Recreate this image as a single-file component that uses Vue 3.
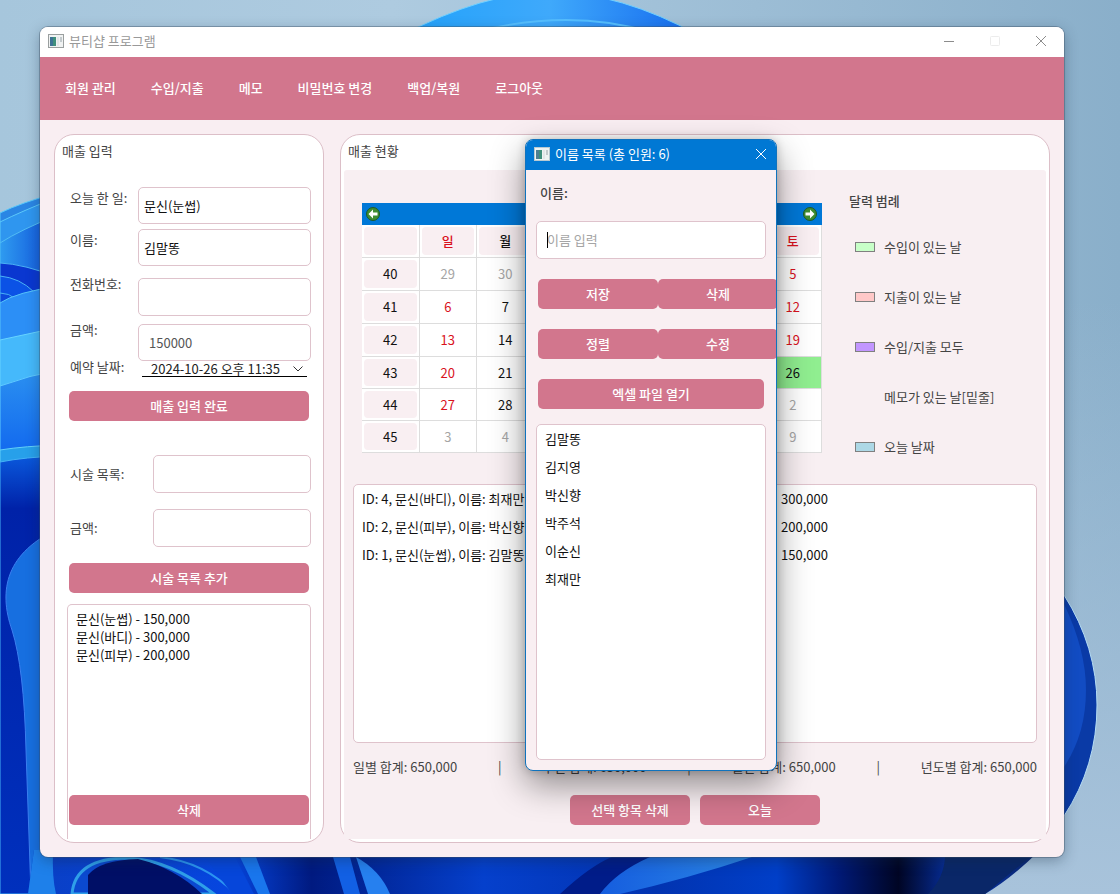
<script setup>
import { ref } from 'vue'

const menus = ['회원 관리', '수입/지출', '메모', '비밀번호 변경', '백업/복원', '로그아웃']

const work = ref('문신(눈썹)')
const customer = ref('김말똥')
const phone = ref('')
const amount = ref('150000')
const service = ref('')
const price = ref('')
const nameQuery = ref('')

const services = ['문신(눈썹) - 150,000', '문신(바디) - 300,000', '문신(피부) - 200,000']

const weekdays = ['일', '월', '화', '수', '목', '금', '토']
const weeks = [
  { no: 40, days: [29, 30, 1, 2, 3, 4, 5] },
  { no: 41, days: [6, 7, 8, 9, 10, 11, 12] },
  { no: 42, days: [13, 14, 15, 16, 17, 18, 19] },
  { no: 43, days: [20, 21, 22, 23, 24, 25, 26] },
  { no: 44, days: [27, 28, 29, 30, 31, 1, 2] },
  { no: 45, days: [3, 4, 5, 6, 7, 8, 9] }
]

const dialogOpen = ref(true)

function isCovered(col) {
  return dialogOpen.value && col > 1 && col < 6
}

function dayClass(row, col, day) {
  const outside = (row === 0 && day > 20) || (row > 3 && day < 10)
  const income = row === 3 && col === 6
  return {
    outside,
    income,
    weekend: !outside && !income && (col === 0 || col === 6)
  }
}

const legend = [
  { tone: 'green', text: '수입이 있는 날' },
  { tone: 'red', text: '지출이 있는 날' },
  { tone: 'purple', text: '수입/지출 모두' },
  { tone: 'none', text: '메모가 있는 날[밑줄]' },
  { tone: 'blue', text: '오늘 날짜' }
]

const records = [
  { text: 'ID: 4, 문신(바디), 이름: 최재만', amount: '300,000' },
  { text: 'ID: 2, 문신(피부), 이름: 박신향', amount: '200,000' },
  { text: 'ID: 1, 문신(눈썹), 이름: 김말똥', amount: '150,000' }
]

const names = ['김말똥', '김지영', '박신향', '박주석', '이순신', '최재만']
</script>

<template>
  <div class="desktop">
    <svg class="wallpaper" viewBox="0 0 1120 894" preserveAspectRatio="none" aria-hidden="true">
      <defs>
        <linearGradient id="sky" x1="0" y1="0" x2="1" y2="0">
          <stop offset="0" stop-color="#a6c6dc" />
          <stop offset=".35" stop-color="#aecbe0" />
          <stop offset="1" stop-color="#8aafca" />
        </linearGradient>
        <linearGradient id="haze" x1="0" y1="0" x2="0" y2="1">
          <stop offset="0" stop-color="#a8c3db" stop-opacity="0" />
          <stop offset="1" stop-color="#a8c3db" />
        </linearGradient>
        <linearGradient id="crest" x1="0" y1="0" x2="1" y2="0">
          <stop offset="0" stop-color="#22a2fb" />
          <stop offset=".5" stop-color="#3fa9fb" />
          <stop offset="1" stop-color="#1468ee" />
        </linearGradient>
        <linearGradient id="petalA" x1="0" y1="0" x2="1" y2="0">
          <stop offset="0" stop-color="#2f9cf0" />
          <stop offset="1" stop-color="#0a45d6" />
        </linearGradient>
        <linearGradient id="petalB" x1="0" y1="0" x2="0" y2="1">
          <stop offset="0" stop-color="#2b90f0" />
          <stop offset="1" stop-color="#0453ee" />
        </linearGradient>
        <linearGradient id="deep" x1="0" y1="0" x2="0" y2="1">
          <stop offset="0" stop-color="#0a58dc" />
          <stop offset=".12" stop-color="#0022a8" />
          <stop offset="1" stop-color="#0030bd" />
        </linearGradient>
        <linearGradient id="floor" x1="0" y1="0" x2="1" y2="0">
          <stop offset="0" stop-color="#0a3fc4" />
          <stop offset=".2" stop-color="#0646e0" />
          <stop offset=".28" stop-color="#001a80" />
          <stop offset=".45" stop-color="#0540cc" />
          <stop offset=".62" stop-color="#0233b0" />
          <stop offset=".74" stop-color="#003fc8" />
          <stop offset=".8" stop-color="#001a78" />
          <stop offset=".86" stop-color="#000524" />
          <stop offset=".92" stop-color="#0836b0" />
          <stop offset="1" stop-color="#0a2468" />
        </linearGradient>
        <linearGradient id="streak" x1="0" y1="0" x2="1" y2="0">
          <stop offset="0" stop-color="#1155dd" />
          <stop offset="1" stop-color="#2b86e6" />
        </linearGradient>
      </defs>
      <rect width="1120" height="894" fill="url(#sky)" />
      <rect y="300" width="1120" height="594" fill="url(#haze)" />

      <path d="M400 36Q485-8 550-8Q620-8 700 36Z" fill="url(#crest)" stroke="#6fd0ff" />
      <path d="M475 32Q570 8 650 32" fill="none" stroke="#55bfff" stroke-width="2" />

      <path d="M0 213Q20 203 60 192V500H0Z" fill="#2a86e4" stroke="#58c8fa" />
      <path d="M0 222Q20 212 60 196V500H0Z" fill="#2f96ef" stroke="#5cc9fa" />
      <path d="M0 243Q20 230 60 214V500H0Z" fill="url(#petalA)" stroke="#51bdf5" />
      <path d="M0 263Q24 264 60 278V500H0Z" fill="#0a37d0" stroke="#4ab2f5" />
      <path d="M0 276Q20 278 34 292V500H0Z" fill="#0b52e6" stroke="#4ab2f5" />
      <path d="M0 293Q9 293 16 299V500H0Z" fill="#0c48dc" stroke="#4ab2f5" />
      <path d="M0 303Q16 292 60 286V500H0Z" fill="#2c8ff6" stroke="#56c3fa" />
      <path d="M0 340L60 327V500H0Z" fill="#45b9fb" stroke="#67d4ff" />
      <path d="M0 386Q30 375 60 370V500H0Z" fill="url(#petalB)" stroke="#5fcbff" />
      <path d="M0 450Q25 446 60 445V894H0Z" fill="#27a0ea" stroke="#63d0f8" />
      <path d="M0 462Q25 457 60 456V894H0Z" fill="url(#deep)" stroke="#45b2f5" />
      <path d="M60 528C6 552-2 590 12 630Q24 668 26 750L31 894H60Z" fill="#176fe0" stroke="#3b7ff0" />

      <path d="M34 850H1040Q1012 878 985 894H28Z" fill="url(#floor)" />
      <path d="M34 850H53Q52 878 56 894H28Z" fill="#1e80ea" />
      <path d="M72 894Q75 858 128 858Q170 860 214 894Z" fill="#0b49d0" stroke="#2f9fe9" stroke-width="3" />
      <path d="M88 894V875Q100 860 138 859Q175 868 202 894Z" fill="#000f66" />
      <path d="M160 857Q205 862 235 894" fill="none" stroke="#2b95f2" stroke-width="2" />
      <path d="M205 857H235L254 894H232Z" fill="#0646da" />
      <path d="M240 857H256L270 894H258Z" fill="#1976ed" />
      <path d="M333 857H350L360 894H344Z" fill="#1260e4" />
      <path d="M356 857Q380 870 390 894H368Z" fill="#2680ef" />
      <path d="M570 894Q602 864 622 857H752Q690 878 620 894Z" fill="url(#streak)" />
      <path d="M560 894Q590 866 612 857H650Q616 872 600 894Z" fill="#001c89" />
      <path d="M945 857H1030L985 894H928Q944 878 945 857Z" fill="#0a2768" />
      <path d="M1064 595Q1097 647 1097 705Q1097 766 1064 816H1050V595Z" fill="#0a3aa6" stroke="#b5dcf4" />
      <path d="M1064 604Q1086 650 1086 690Q1086 734 1064 767H1050V604Z" fill="#124cc3" />
    </svg>

    <main class="window">
      <header class="titlebar">
        <svg class="app-icon" viewBox="0 0 16 14" aria-hidden="true">
          <rect x=".5" y=".5" width="15" height="13" fill="#f0f2f2" stroke="#9a9f9f" />
          <rect x="2" y="3" width="6" height="9" fill="#3f8f7c" />
          <rect x="2" y="3" width="3" height="9" fill="#3d7295" />
          <rect x="9" y="3" width="2" height="9" fill="#e3e6e8" />
          <rect x="12" y="3" width="2" height="5" fill="#c3cacd" />
        </svg>
        <h1 class="app-title">뷰티샵 프로그램</h1>
        <button class="win-btn" aria-label="최소화">
          <svg viewBox="0 0 12 12"><path d="M1 6.5H11" stroke="#8c8c8c" /></svg>
        </button>
        <button class="win-btn" aria-label="최대화" disabled>
          <svg viewBox="0 0 12 12"><rect x="1.5" y="1.5" width="9" height="9" rx="1" fill="none" stroke="#ececec" /></svg>
        </button>
        <button class="win-btn" aria-label="닫기">
          <svg viewBox="0 0 12 12"><path d="M1 1L11 11M11 1L1 11" stroke="#8c8c8c" /></svg>
        </button>
      </header>

      <nav class="menu">
        <button v-for="m in menus" :key="m">{{ m }}</button>
      </nav>

      <div class="content">
        <section class="panel entry">
          <h2>매출 입력</h2>
          <div class="form">
            <div class="row">
              <label for="work">오늘 한 일:</label>
              <input id="work" v-model="work" type="text" />
            </div>
            <div class="row">
              <label for="customer">이름:</label>
              <input id="customer" v-model="customer" type="text" />
            </div>
            <div class="row lowered">
              <label for="phone">전화번호:</label>
              <input id="phone" v-model="phone" type="text" />
            </div>
            <div class="row lowered amount">
              <label for="amount">금액:</label>
              <input id="amount" v-model="amount" type="text" />
            </div>
            <div class="row date">
              <label for="date">예약 날짜:</label>
              <div class="combo">
                <select id="date">
                  <option>2024-10-26 오후 11:35</option>
                </select>
                <svg viewBox="0 0 10 6" aria-hidden="true"><path d="M.5 .5L5 5L9.5 .5" fill="none" stroke="#333" /></svg>
              </div>
            </div>
          </div>
          <button class="btn submit">매출 입력 완료</button>
          <div class="service-row">
            <label for="service">시술 목록:</label>
            <input id="service" v-model="service" type="text" />
          </div>
          <div class="service-row">
            <label for="price">금액:</label>
            <input id="price" v-model="price" type="text" />
          </div>
          <button class="btn">시술 목록 추가</button>
          <div class="service-box">
            <ul>
              <li v-for="s in services" :key="s">{{ s }}</li>
            </ul>
            <button class="btn">삭제</button>
          </div>
        </section>

        <section class="panel status">
          <h2>매출 현황</h2>
          <div class="board">
            <div class="overview">
              <div class="calendar">
                <div class="cal-nav">
                  <button aria-label="이전 달">
                    <svg viewBox="0 0 14 14">
                      <circle cx="7" cy="7" r="6.5" fill="#3f8d30" stroke="#1d5a2a" />
                      <path d="M7 2.5L2.5 7L7 11.5V8.5H11.5V5.5H7Z" fill="#fff" />
                    </svg>
                  </button>
                  <button aria-label="다음 달">
                    <svg viewBox="0 0 14 14">
                      <circle cx="7" cy="7" r="6.5" fill="#3f8d30" stroke="#1d5a2a" />
                      <path d="M7 2.5L11.5 7L7 11.5V8.5H2.5V5.5H7Z" fill="#fff" />
                    </svg>
                  </button>
                </div>
                <table>
                  <thead>
                    <tr>
                      <th><span></span></th>
                      <th v-for="(d, i) in weekdays" :key="d" :class="{ weekend: i === 0 || i === 6, covered: isCovered(i) }"><span>{{ d }}</span></th>
                    </tr>
                  </thead>
                  <tbody>
                    <tr v-for="(w, r) in weeks" :key="w.no">
                      <th><span>{{ w.no }}</span></th>
                      <td v-for="(d, c) in w.days" :key="c" :class="[dayClass(r, c, d), { covered: isCovered(c) }]"><span>{{ d }}</span></td>
                    </tr>
                  </tbody>
                </table>
              </div>
              <div class="legend">
                <h3>달력 범례</h3>
                <ul>
                  <li v-for="l in legend" :key="l.text"><i :class="l.tone"></i>{{ l.text }}</li>
                </ul>
              </div>
            </div>
            <ul class="records">
              <li v-for="r in records" :key="r.text"><span>{{ r.text }}</span><span>{{ r.amount }}</span></li>
            </ul>
            <div class="totals">
              <span>일별 합계: 650,000</span>
              <span>|</span>
              <span>주간 합계: 650,000</span>
              <span>|</span>
              <span>월간 합계: 650,000</span>
              <span>|</span>
              <span>년도별 합계: 650,000</span>
            </div>
            <div class="actions">
              <button class="btn">선택 항목 삭제</button>
              <button class="btn">오늘</button>
            </div>
          </div>
        </section>
      </div>

      <div v-if="dialogOpen" class="dialog" role="dialog" aria-labelledby="dialog-title">
        <header>
          <svg class="app-icon" viewBox="0 0 16 14" aria-hidden="true">
            <rect x=".5" y=".5" width="15" height="13" fill="#eef3f3" stroke="#b9cad2" />
            <rect x="2" y="3" width="6" height="9" fill="#3f8f7c" />
            <rect x="2" y="3" width="3" height="9" fill="#4d7f92" />
            <rect x="9" y="3" width="2" height="9" fill="#e3e6e8" />
            <rect x="12" y="3" width="2" height="5" fill="#c3cacd" />
          </svg>
          <h2 id="dialog-title">이름 목록 (총 인원: 6)</h2>
          <button aria-label="닫기" @click="dialogOpen = false">
            <svg viewBox="0 0 12 12"><path d="M1 1L11 11M11 1L1 11" stroke="#fff" /></svg>
          </button>
        </header>
        <div class="dialog-body">
          <label for="name">이름:</label>
          <div class="name-field">
            <input id="name" v-model="nameQuery" type="text" placeholder="이름 입력" />
            <span class="caret"></span>
          </div>
          <div class="pair">
            <button class="btn">저장</button>
            <button class="btn">삭제</button>
          </div>
          <div class="pair">
            <button class="btn">정렬</button>
            <button class="btn">수정</button>
          </div>
          <button class="btn excel">엑셀 파일 열기</button>
          <ul class="name-list">
            <li v-for="n in names" :key="n">{{ n }}</li>
          </ul>
        </div>
      </div>
    </main>
  </div>
</template>

<style>
body {
  margin: 0;
}
</style>

<style scoped>
* {
  box-sizing: border-box;
}

.desktop {
  position: relative;
  display: flex;
  min-height: 100vh;
  padding: 27px 56px 37px 40px;
  font: 13px/18px "Noto Sans CJK KR", "Noto Sans", sans-serif;
  color: #444;
}

.wallpaper {
  position: absolute;
  inset: 0;
  width: 100%;
  height: 100%;
}

h1,
h2,
h3,
ul {
  margin: 0;
  padding: 0;
  font: inherit;
  list-style: none;
}

button,
input,
select {
  font: inherit;
  color: inherit;
}

button {
  padding: 0;
  border: 0;
  background: none;
}

svg {
  display: block;
}

.window {
  position: relative;
  flex: 1;
  min-width: 0;
  display: flex;
  flex-direction: column;
  border-radius: 8px;
  background: #f9eef2;
  box-shadow: 0 0 0 1px rgba(60, 80, 100, .4), 0 4px 14px rgba(20, 40, 60, .35);
}

.titlebar {
  display: flex;
  align-items: center;
  height: 30px;
  padding: 0 0 2px 8px;
  border-radius: 8px 8px 0 0;
  background: #fff;
}

.app-icon {
  width: 16px;
  height: 14px;
}

.app-title {
  flex: 1;
  margin-left: 5px;
  color: #999;
}

.win-btn {
  display: grid;
  place-items: center;
  width: 46px;
  height: 28px;
}

.win-btn svg,
.dialog header button svg {
  width: 12px;
  height: 12px;
}

.menu {
  display: flex;
  gap: 35px;
  height: 63px;
  padding: 0 25px 2px;
  background: #d2768d;
  color: #fff;
  font-weight: 500;
}

.content {
  flex: 1;
  display: flex;
  gap: 16px;
  padding: 14px;
}

.panel {
  display: flex;
  flex-direction: column;
  border: 1px solid #dcbfc8;
  border-radius: 20px;
  background: #fff;
}

.panel h2 {
  height: 35px;
  padding: 7px 7px 0;
}

.entry {
  width: 270px;
  padding: 0 12px 3px;
}

.entry h2 {
  padding-left: 0;
  margin-left: -5px;
}

.form {
  padding-top: 17px;
}

.row {
  display: grid;
  grid-template-columns: 68px 1fr;
  margin: 0 0 5px 3px;
}

.row label {
  line-height: 22px;
}

input {
  width: 100%;
  min-width: 0;
  height: 37px;
  padding: 0 5px;
  border: 1px solid #dfc3cc;
  border-radius: 5px;
  background: #fff;
  color: #111;
  outline: 0;
}

.row:nth-child(2) {
  margin-bottom: 7px;
}

.row.lowered {
  margin-bottom: 3px;
}

.row.lowered input {
  height: 38px;
  margin-top: 5px;
}

.row.amount {
  margin-bottom: 0;
}

.row.amount input {
  height: 37px;
  padding-left: 10px;
  color: #555;
}

.row.date {
  margin-bottom: 14px;
}

.row.date label {
  line-height: 12px;
}

.combo {
  position: relative;
  height: 16px;
  margin: 0 4px;
  border-bottom: 1px solid #000;
}

.combo select {
  display: block;
  width: 100%;
  height: 15px;
  padding: 0 0 0 9px;
  border: 0;
  border-radius: 4px;
  background: #fff;
  color: #222;
  line-height: 15px;
  appearance: none;
}

.combo svg {
  position: absolute;
  right: 4px;
  top: 5px;
  width: 10px;
  height: 6px;
  pointer-events: none;
}

.btn {
  height: 30px;
  border-radius: 5px;
  background: #d2768d;
  color: #fff;
  font-weight: 500;
}

.entry > .btn {
  margin: 0 2px;
}

.entry > .submit {
  margin-bottom: 34px;
}

.service-row {
  display: grid;
  grid-template-columns: 83px 1fr;
  align-items: center;
  margin: 0 0 16px 3px;
}

.service-row input,
.name-field input {
  height: 38px;
}

.service-box {
  flex: 1;
  display: flex;
  flex-direction: column;
  justify-content: space-between;
  margin-top: 11px;
  padding: 5px 1px 14px;
  border: 1px solid #dfc3cc;
  border-bottom: 0;
  border-radius: 5px 5px 0 0;
  color: #111;
}

.service-box ul {
  padding-left: 7px;
}

.status {
  flex: 1;
  min-width: 0;
  padding: 0 3px 3px;
}

.status h2 {
  padding-left: 4px;
}

.board {
  flex: 1;
  display: flex;
  flex-direction: column;
  padding: 33px 9px 14px;
  border-radius: 3px;
  background: #f8eff2;
}

.overview {
  display: flex;
  padding: 0 9px;
}

.calendar {
  width: 460px;
}

.cal-nav {
  display: flex;
  justify-content: space-between;
  align-items: center;
  height: 22px;
  padding: 0 5px 0 4px;
  background: #0078d7;
}

.cal-nav svg {
  width: 14px;
  height: 14px;
}

table {
  width: 100%;
  table-layout: fixed;
  border-spacing: 0;
  background: #fff;
  color: #111;
}

th,
td {
  height: 33px;
  padding: 0;
  border: solid #ddd;
  border-width: 0 1px 1px 0;
  font-weight: 400;
  text-align: center;
}

th {
  padding: 2px;
}

thead th {
  font-weight: 500;
}

th span {
  display: grid;
  place-items: center;
  height: 28px;
  border-radius: 4px;
  background: #f9eff2;
}

tbody tr:nth-child(n + 4) > * {
  height: 32px;
}

tbody tr:nth-child(n + 4) span {
  height: 27px;
}

.covered span {
  visibility: hidden;
}

.weekend {
  color: #d9121d;
}

.outside {
  color: #a5a5a5;
}

.income {
  background: #90ee90;
}

.legend {
  padding-left: 27px;
}

.legend h3 {
  margin-top: -11px;
  font-weight: 500;
}

.legend li {
  display: flex;
  align-items: center;
  gap: 9px;
  height: 50px;
  padding-left: 6px;
}

.legend ul {
  padding-top: 12px;
}

.legend i {
  width: 20px;
  height: 10px;
  border: 1px solid #808080;
}

.legend .green {
  background: #c8ffc8;
}

.legend .red {
  background: #ffc8c8;
}

.legend .purple {
  background: #c296ff;
}

.legend .blue {
  background: #add8e6;
}

.legend .none {
  border-color: transparent;
}

.records,
.name-list {
  border: 1px solid #dfc3cc;
  border-radius: 5px;
  background: #fff;
  color: #111;
  line-height: 28px;
}

.records {
  flex: 1;
  margin-top: 12px;
  padding-left: 8px;
}

.records li {
  display: grid;
  grid-template-columns: 419px 1fr;
}

.totals {
  display: flex;
  justify-content: space-between;
  margin-top: 15px;
}

.actions {
  display: flex;
  justify-content: center;
  gap: 10px;
  margin-top: 19px;
}

.actions .btn {
  width: 120px;
}

.dialog {
  position: absolute;
  left: 485px;
  top: 112px;
  width: 252px;
  overflow: hidden;
  border: 1px solid #1073bd;
  border-radius: 8px;
  background: #f9eff2;
  box-shadow: 0 14px 34px rgba(0, 0, 0, .42), 0 0 10px rgba(0, 0, 0, .2);
}

.dialog header {
  display: flex;
  align-items: center;
  height: 30px;
  padding: 0 0 2px 8px;
  background: #0078d4;
  color: #fff;
}

.dialog header h2 {
  flex: 1;
  margin-left: 5px;
}

.dialog header button {
  display: grid;
  place-items: center;
  width: 30px;
  height: 28px;
}

.dialog-body {
  display: flex;
  flex-direction: column;
  padding: 14px 10px 10px;
}

.dialog-body label {
  margin: 0 0 19px 4px;
  font-weight: 500;
}

.name-field {
  position: relative;
  margin-bottom: 20px;
}

.name-field input {
  padding: 0 10px 2px;
}

.name-field input::placeholder {
  color: #a5a5a5;
}

.caret {
  position: absolute;
  left: 11px;
  top: 11px;
  width: 1px;
  height: 16px;
  background: #000;
}

.pair {
  display: flex;
  margin: 0 0 20px 2px;
}

.pair .btn {
  flex: 0 0 120px;
}

.excel {
  margin: 0 2px 15px;
}

.name-list {
  min-height: 336px;
  padding-left: 8px;
}
</style>
